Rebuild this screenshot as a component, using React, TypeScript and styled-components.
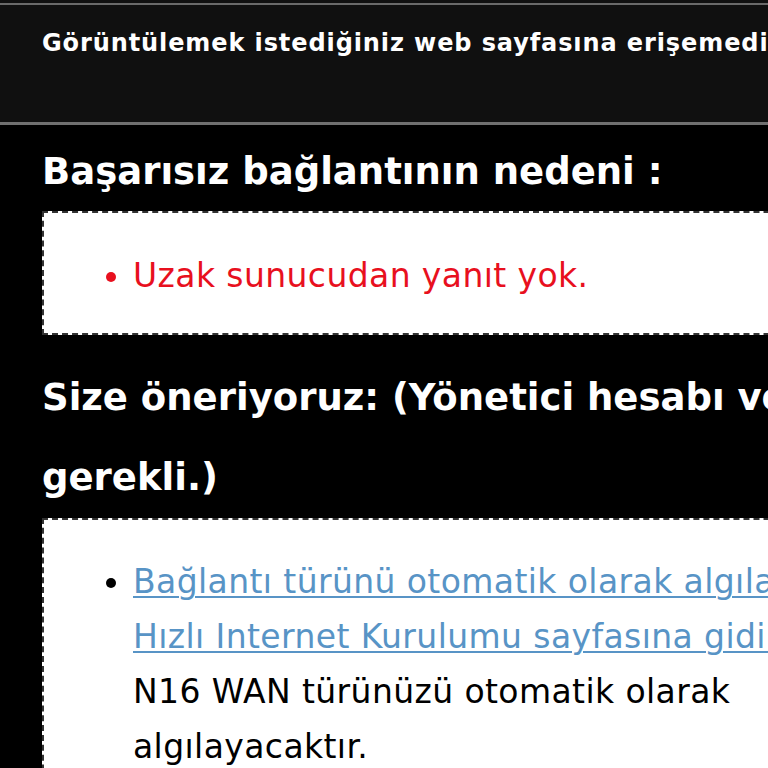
import React from 'react';
import styled, { createGlobalStyle } from 'styled-components';

const GlobalStyle = createGlobalStyle`
  html, body {
    margin: 0;
    padding: 0;
    background: #000;
    overflow: hidden;
  }
  body {
    font-family: "DejaVu Sans", Verdana, sans-serif;
  }
`;

const Page = styled.div`
  width: 1040px;
  min-height: 768px;
  background: #000;
`;

const Header = styled.div`
  background: #101010;
  padding-top: 3px;
  border-bottom: 3px solid #707070;
`;

const HeaderInner = styled.div`
  border-top: 2px solid #6a6a6a;
  height: 119px;
  box-sizing: border-box;
  padding: 18px 0 0 42px;
  color: #fff;
  font-size: 24px;
  font-weight: bold;
  letter-spacing: 0.9px;
  line-height: 40px;
  white-space: nowrap;
`;

const Content = styled.div`
  width: 958px;
  padding-left: 42px;
`;

const Heading = styled.h2<{ $lh: number; $top: number }>`
  margin: ${(p) => p.$top}px 0 0;
  color: #fff;
  font-size: 37px;
  font-weight: bold;
  line-height: ${(p) => p.$lh}px;
`;

const Box = styled.div<{ $top: number; $padTop: number; $padBottom: number }>`
  margin-top: ${(p) => p.$top}px;
  background: #fff;
  border: 2px dashed #333;
  padding: ${(p) => p.$padTop}px 55px ${(p) => p.$padBottom}px 89px;
`;

const List = styled.ul<{ $lh: number }>`
  margin: 0;
  padding: 0;
  font-size: 33px;
  letter-spacing: 0.4px;
  line-height: ${(p) => p.$lh}px;
`;

const Item = styled.li<{ $color: string }>`
  color: ${(p) => p.$color};
`;

const Link = styled.a`
  color: #5894c6;
  text-decoration: underline;
  text-decoration-thickness: 2px;
  text-underline-offset: 3px;
`;

const App = () => {
  return (
    <>
      <GlobalStyle />
      <Page>
        <Header>
          <HeaderInner>Görüntülemek istediğiniz web sayfasına erişemediniz.</HeaderInner>
        </Header>
        <Content>
          <Heading $lh={44} $top={25}>Başarısız bağlantının nedeni :</Heading>
          <Box $top={17} $padTop={41} $padBottom={35}>
            <List $lh={44}>
              <Item $color="#e8101e">Uzak sunucudan yanıt yok.</Item>
            </List>
          </Box>
          <Heading $lh={80} $top={23}>Size öneriyoruz: (Yönetici hesabı ve şifresi gerekli.)</Heading>
          <Box $top={0} $padTop={34} $padBottom={34}>
            <List $lh={55}>
              <Item $color="#000">
                <Link href="#">Bağlantı türünü otomatik olarak algılamak için Hızlı Internet Kurulumu sayfasına gidin.</Link>
                <br />
                N16 WAN türünüzü otomatik olarak algılayacaktır.
              </Item>
            </List>
          </Box>
        </Content>
      </Page>
    </>
  );
};

export default App;
